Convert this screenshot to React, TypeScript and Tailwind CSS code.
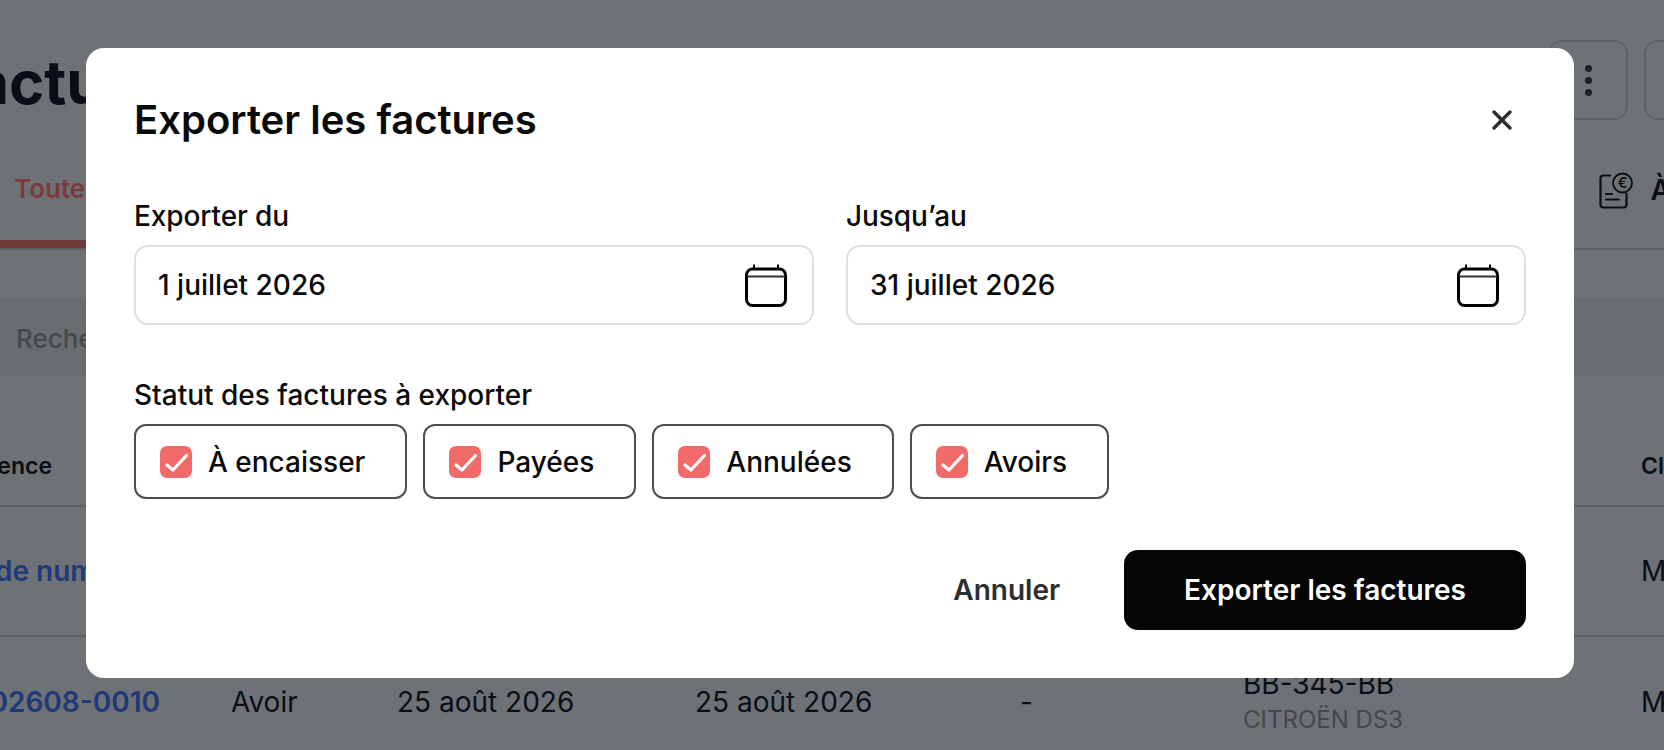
import { X } from 'lucide-react'

const fontFamily = "font-['Inter','Noto_Sans',sans-serif]"

function CalendarIcon() {
  return (
    <svg width="42" height="43" viewBox="0 0 42 43" fill="none" className="shrink-0">
      <path d="M9 0.5V5M33 0.5V5" stroke="#000" strokeWidth="2" />
      <rect x="1.5" y="5" width="39" height="36.5" rx="6" stroke="#000" strokeWidth="3" />
      <path d="M2 12.5H40" stroke="#333" strokeWidth="2" />
    </svg>
  )
}

function ReceiptIcon() {
  return (
    <svg width="34" height="37" viewBox="0 0 34 37" fill="none" className="shrink-0">
      <path
        d="M11 3.5H4.5C2.8 3.5 1.5 4.8 1.5 6.5V32.5C1.5 34.2 2.8 35.5 4.5 35.5H24.5C26.2 35.5 27.5 34.2 27.5 32.5V21.5"
        stroke="#0b0f15"
        strokeWidth="2.2"
        strokeLinecap="round"
      />
      <circle cx="23.5" cy="11" r="9.5" stroke="#0b0f15" strokeWidth="1.8" />
      <text x="23.5" y="16" textAnchor="middle" fontSize="14" fontWeight="600" fill="#0b0f15">€</text>
      <path d="M7 22H13M7 27.5H20" stroke="#0b0f15" strokeWidth="2.2" strokeLinecap="round" />
    </svg>
  )
}

function DateField({ label, value }: { label: string; value: string }) {
  return (
    <div className="flex flex-col">
      <label className="text-[28px] leading-[34px] font-medium text-[#0a0a0a] mb-[12px] tracking-[-0.1px]">{label}</label>
      <div className="h-[80px] flex items-center justify-between pl-[22px] pr-[25px] bg-white border-2 border-[#e0e0e0] rounded-[14px]">
        <span className="text-[28px] font-medium text-[#0a0a0a]">{value}</span>
        <CalendarIcon />
      </div>
    </div>
  )
}

function StatusChip({ label }: { label: string }) {
  return (
    <div className="h-[75px] flex items-center gap-[16px] pl-[24px] pr-[40px] border-2 border-[#4d4d4d] rounded-[12px]">
      <span className="w-[32px] h-[32px] rounded-[7px] bg-[#f16b6b] flex items-center justify-center shrink-0">
        <svg width="32" height="32" viewBox="0 0 32 32" fill="none">
          <path d="M7 19L13 24L26.5 9.5" stroke="#fff" strokeWidth="3.2" strokeLinecap="round" strokeLinejoin="round" />
        </svg>
      </span>
      <span className="text-[28px] font-medium text-[#0a0a0a] whitespace-nowrap">{label}</span>
    </div>
  )
}

const rowCols = 'grid grid-cols-[231px_166px_298px_325px_223px_398px_1fr] items-center whitespace-nowrap'

export default function App() {
  return (
    <div className={`${fontFamily} relative w-[1664px] h-[750px] overflow-hidden bg-[#6e7175]`}>
      {/* page behind the dialog */}
      <div className="flex flex-col">
        <div className="h-[150px] flex items-start justify-between">
          <h1 className="text-[60px] leading-[72px] font-bold text-[#0a0f16] mt-[46px] -ml-[60px]">Factures</h1>
          <div className="flex gap-[16px] mt-[40px] -mr-[60px]">
            <div className="w-[80px] h-[80px] rounded-[14px] border-2 border-[#5f6266] flex flex-col items-center justify-center gap-[5px]">
              <span className="w-[7px] h-[7px] rounded-full bg-[#1e2227]" />
              <span className="w-[7px] h-[7px] rounded-full bg-[#1e2227]" />
              <span className="w-[7px] h-[7px] rounded-full bg-[#1e2227]" />
            </div>
            <div className="w-[80px] h-[80px] rounded-[14px] border-2 border-[#5f6266]" />
          </div>
        </div>
        <div className="h-[100px] flex items-start justify-between border-b-2 border-[#5e6165] relative">
          <div className="h-full w-[120px] border-b-[8px] border-[#71383a] -mb-[2px] pt-[19px] pl-[14px]">
            <span className="text-[26px] font-semibold text-[#7d3a3c]">Toutes</span>
          </div>
          <div className="flex items-center gap-[17px] pt-[19px] -mr-[146px] text-[28px] font-semibold text-[#0b0f15]">
            <ReceiptIcon />
            <span>À encaisser</span>
          </div>
        </div>
        <div className="h-[48px]" />
        <div className="h-[77px] bg-[#696c70] flex items-center pl-[16px] pt-[4px] text-[26px] font-medium text-[#45484c]">
          Rechercher
        </div>
        <div className={`${rowCols} h-[132px] pt-[52px] border-b-2 border-[#5e6165] text-[23px] font-semibold text-[#0a0f16]`}>
          <span className="flex justify-end pr-[179px] overflow-hidden">Référence</span>
          <span />
          <span />
          <span />
          <span />
          <span />
          <span>Client</span>
        </div>
        <div className={`${rowCols} h-[130px] border-b-2 border-[#5e6165] text-[28px] text-[#0a0f16]`}>
          <span className="font-semibold text-[#1f3a7a] -ml-[5px]">de numéro</span>
          <span />
          <span />
          <span />
          <span />
          <span />
          <span>Martin</span>
        </div>
        <div className={`${rowCols} h-[130px] text-[28px] text-[#0a0f16]`}>
          <span className="flex justify-end pr-[71px] overflow-hidden font-semibold text-[#1f3a7a]">F-202608-0010</span>
          <span>Avoir</span>
          <span>25 août 2026</span>
          <span>25 août 2026</span>
          <span>-</span>
          <span className="flex flex-col leading-[35px]">
            <span>BB-345-BB</span>
            <span className="text-[24px] text-[#45484c]">CITROËN DS3</span>
          </span>
          <span>Martin</span>
        </div>
      </div>

      {/* dialog */}
      <div className="absolute inset-0 pr-[4px] pt-[48px] flex justify-center items-start">
        <div className="w-[1488px] h-[630px] bg-white rounded-[18px] pt-[46px] px-[48px] flex flex-col">
          <div className="flex items-center justify-between h-[52px]">
            <h2 className="text-[40px] font-semibold text-[#0a0a0a]">Exporter les factures</h2>
            <X className="w-[32px] h-[32px] text-[#2e2e2e] mr-[8px]" strokeWidth={2.6} />
          </div>
          <div className="grid grid-cols-2 gap-[32px] mt-[53px]">
            <DateField label="Exporter du" value="1 juillet 2026" />
            <DateField label="Jusqu’au" value="31 juillet 2026" />
          </div>
          <div className="mt-[53px] text-[28px] leading-[34px] font-medium text-[#0a0a0a] mb-[12px]">
            Statut des factures à exporter
          </div>
          <div className="flex gap-[16px]">
            <StatusChip label="À encaisser" />
            <StatusChip label="Payées" />
            <StatusChip label="Annulées" />
            <StatusChip label="Avoirs" />
          </div>
          <div className="flex justify-end items-center mt-[51px]">
            <button className="h-[80px] pl-[61px] pr-[64px] text-[28px] font-semibold text-[#2e2e2e]">Annuler</button>
            <button className="h-[80px] px-[60px] rounded-[14px] bg-[#050505] text-[28px] font-semibold text-white">
              Exporter les factures
            </button>
          </div>
        </div>
      </div>
    </div>
  )
}
